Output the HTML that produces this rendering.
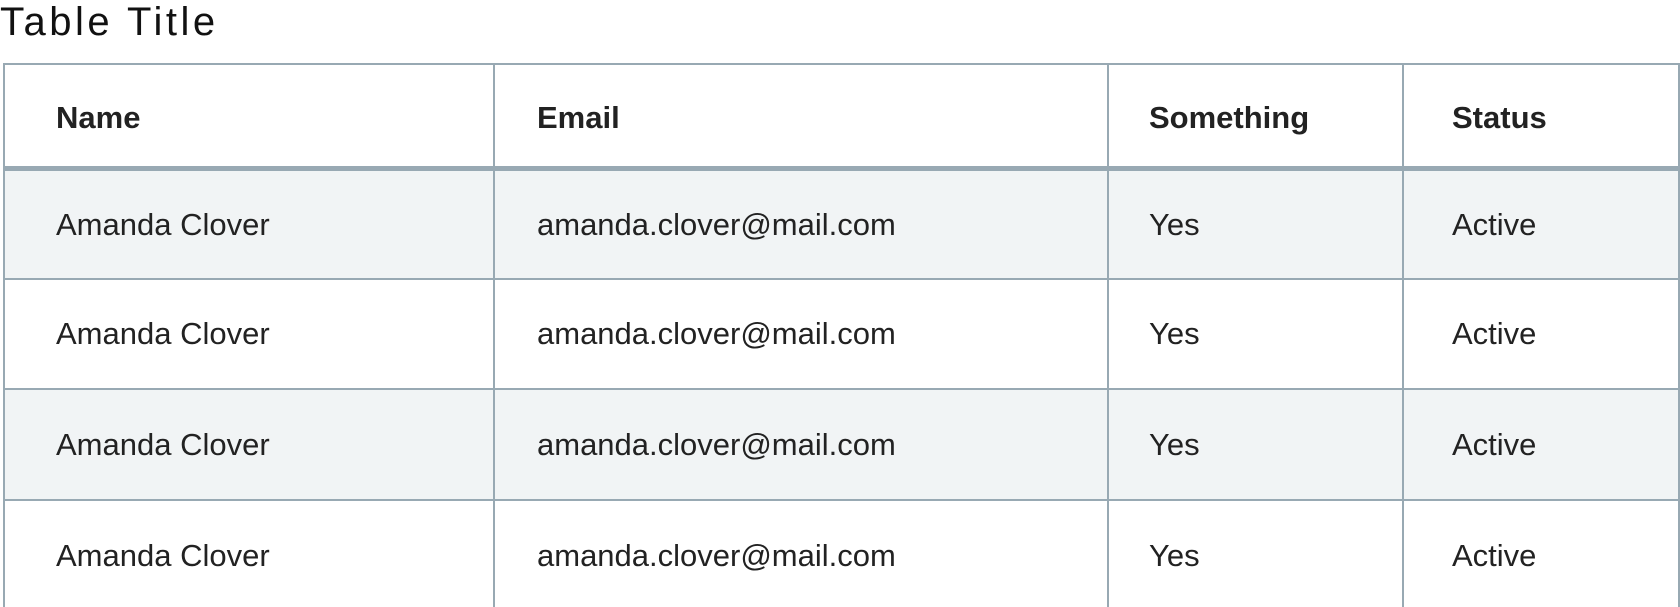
<!DOCTYPE html>
<html><head><meta charset="utf-8"><style>
html,body{margin:0;padding:0;background:#fff;width:1680px;height:607px;overflow:hidden;font-family:"Liberation Sans",sans-serif;color:#222;}
.wrap{position:relative;width:1680px;height:607px;overflow:hidden;}
.title{position:absolute;left:0;top:0;font-size:40px;letter-spacing:3.5px;line-height:44px;color:#111;}
table{position:absolute;left:3px;top:63px;border-collapse:collapse;width:1677px;}
td,th{border:2px solid #98a9b3;padding:0;text-align:left;font-size:31px;}
td:nth-child(1),th:nth-child(1){padding-left:51px;}
td:nth-child(2),th:nth-child(2){padding-left:42px;}
td:nth-child(3),th:nth-child(3){padding-left:40px;}
td:nth-child(4),th:nth-child(4){padding-left:48px;}
th{height:104px;padding-top:6px !important;box-sizing:border-box;font-weight:bold;border-bottom:5px solid #98a9b3;}
td{height:110.5px;padding-top:1px !important;box-sizing:border-box;}
tr.last td{height:120px;vertical-align:top;padding-top:37px !important;}
tr.s td{background:#f1f4f5;}
</style></head><body><div class="wrap">
<div class="title">Table Title</div>
<table>
<colgroup><col style="width:490px"><col style="width:614px"><col style="width:295px"><col></colgroup>
<tr><th>Name</th><th>Email</th><th>Something</th><th>Status</th></tr>
<tr class="s"><td>Amanda Clover</td><td>amanda.clover@mail.com</td><td>Yes</td><td>Active</td></tr>
<tr><td>Amanda Clover</td><td>amanda.clover@mail.com</td><td>Yes</td><td>Active</td></tr>
<tr class="s"><td>Amanda Clover</td><td>amanda.clover@mail.com</td><td>Yes</td><td>Active</td></tr>
<tr class="last"><td>Amanda Clover</td><td>amanda.clover@mail.com</td><td>Yes</td><td>Active</td></tr>
</table>
</div></body></html>
